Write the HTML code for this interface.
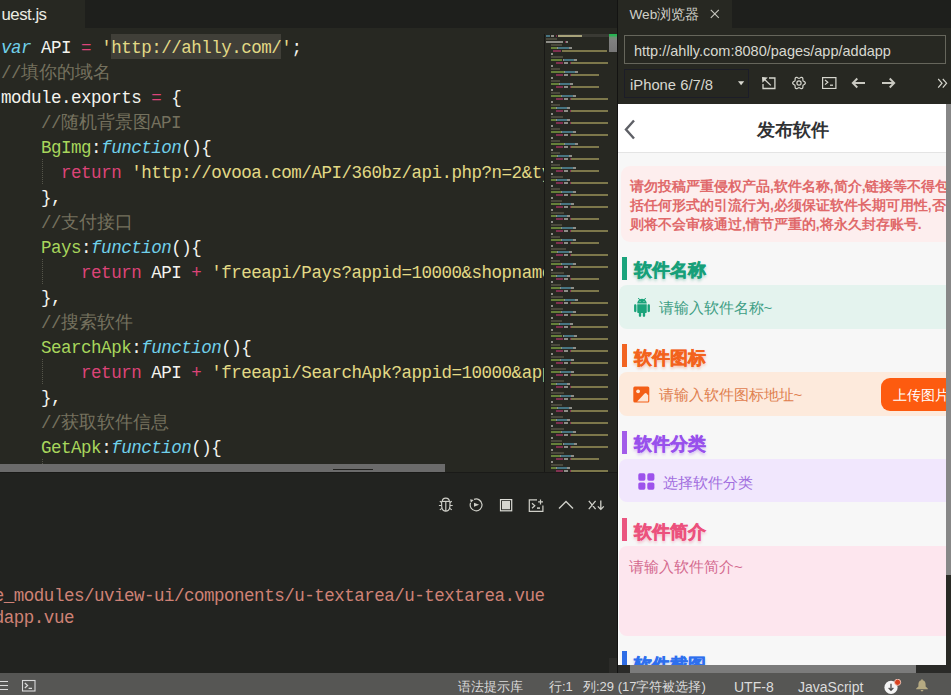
<!DOCTYPE html>
<html><head><meta charset="utf-8">
<style>
*{margin:0;padding:0;box-sizing:border-box}
html,body{width:951px;height:695px;overflow:hidden;background:#1e1f1c;font-family:"Liberation Sans",sans-serif}
.abs{position:absolute}
#tabbar{left:0;top:0;width:618px;height:28px;background:#1e1f1c}
#tab1{left:0;top:0;width:85px;height:28px;background:#272822;color:#ecece4;font-size:16.8px;line-height:30px;padding-left:1.5px;letter-spacing:-0.5px}
#editor{left:0;top:28px;width:617px;height:444px;background:#272822;overflow:hidden}
#code{left:0;top:-28px;width:545px;height:464px;overflow:hidden}
.ln{position:absolute;left:1px;margin-top:1.5px;height:25px;line-height:25px;white-space:pre;font-family:"Liberation Mono",monospace;font-size:17.5px;letter-spacing:-0.49px;color:#f8f8f2}
.cj{font-size:17.6px;letter-spacing:0}
.sel{background:#403f38;display:inline-block;height:25px;position:relative;top:-1.5px}.sel>span{position:relative;top:1.5px}
.guide{position:absolute;left:42px;width:1px;height:25px;border-left:1px dotted #55554a}
#mm{left:544px;top:-28px;width:73px;height:472px;border-left:1px solid transparent}#mmb{left:544px;top:34px;width:1px;height:438px;background:#181816}
#mm i{position:absolute;height:2px;display:block;margin-left:-1px;margin-top:1px}
#vthumb{left:609px;top:34px;width:8px;height:18px;background:linear-gradient(#25b550 0,#2bb055 1.5px,#6f8f74 3.5px,#808080 6px,#777 100%)}
#vgreen{left:609px;top:34px;width:8px;height:3px;background:#1db954}
#hthumb{left:0;top:464px;width:445px;height:8px;background:#6b6b6b}
#panel{left:0;top:472px;width:617px;height:201px;background:#222320}
.out{position:absolute;white-space:pre;font-family:"Liberation Mono",monospace;font-size:17.5px;letter-spacing:-0.49px;color:#cf8276}
#status{left:0;top:673px;width:951px;height:22px;background:#565654;color:#dcdcdc;font-size:13px}
#status span{position:absolute;top:2.5px;line-height:22px;white-space:pre}
/* right */
#rtabbar{left:618px;top:0;width:333px;height:28px;background:#1e1f1c}
#rtab{left:618px;top:0;width:114px;height:28px;background:#272822;color:#d0d0c8;font-size:14px;line-height:28px}
#rtool{left:618px;top:28px;width:333px;height:76px;background:#272822}
#url{left:624px;top:35px;width:322px;height:29px;border:1px solid #66665c;color:#d8d8d0;font-size:14.5px;line-height:31px;padding-left:9px;white-space:nowrap;overflow:hidden}
#dev{left:624px;top:69px;width:125px;height:29px;border:1px solid #1c1d28;background:#262721;color:#d8d8d0;font-size:14.8px;line-height:31px;padding-left:5px}
#web{left:618px;top:104px;width:328px;height:561px;background:#f7f7f7;overflow:hidden}
#vscroll{left:946px;top:104px;width:5px;height:471px;background:#878787}#vtrack{left:946px;top:575px;width:5px;height:90px;background:#292924}
#hscroll{left:618px;top:665px;width:333px;height:8px;background:#2a2a28}
#hscroll2{left:630px;top:665px;width:286px;height:8px;background:#7b7b7b}
.w{position:absolute}
.hdr{left:0;top:0;width:327px;height:49px;background:#fff;border-bottom:1px solid #e4e4e4}
.title{position:absolute;left:0;width:327px;top:2px;text-align:center;line-height:49px;font-size:18px;font-weight:bold;color:#303133}
.notice{left:3px;top:62px;width:330px;height:76px;background:#fdeeee;border-radius:9px}
.ntext{position:absolute;left:9px;top:11px;width:330px;font-size:13.8px;line-height:19px;font-weight:bold;color:#e0696a;white-space:pre}
.bar{position:absolute;left:4px;width:4.5px;height:22.5px}
.sec{position:absolute;left:15.5px;font-size:18.4px;font-weight:bold;-webkit-text-stroke:0.4px currentColor;line-height:24px;white-space:pre}
.box{position:absolute;left:1px;width:335px;border-radius:8px}
.ph{position:absolute;font-size:14px;line-height:20px;white-space:pre}
</style></head><body>
<div id="tabbar" class="abs"></div>
<div id="tab1" class="abs">uest.js</div>
<div id="editor" class="abs">
  <div id="code" class="abs">
  <div class="guide" style="top:159px"></div><div class="guide" style="top:259px"></div><div class="guide" style="top:359px"></div><div class="guide" style="top:459px"></div>
  <div class="ln" style="top:34px"><span style="color:#70d0ea;font-style:italic">var</span><span style="color:#f4f4ee;"> API </span><span style="color:#dc4478;">=</span> <span style="color:#e2d985;">'</span><span class="sel"><span style="color:#e2d985;">http://ahlly.com/</span></span><span style="color:#e2d985;">'</span><span style="color:#f4f4ee;">;</span></div>
<div class="ln" style="top:59px"><span style="color:#75715e;">//</span><span class="cj" style="color:#75715e">填你的域名</span></div>
<div class="ln" style="top:84px"><span style="color:#f4f4ee;">module.exports </span><span style="color:#dc4478;">=</span><span style="color:#f4f4ee;"> {</span></div>
<div class="ln" style="top:109px">    <span style="color:#75715e;">//</span><span class="cj" style="color:#75715e">随机背景图</span><span style="color:#75715e;">API</span></div>
<div class="ln" style="top:134px">    <span style="color:#a8d65c;">BgImg</span><span style="color:#f4f4ee;">:</span><span style="color:#70d0ea;font-style:italic">function</span><span style="color:#f4f4ee;">(){</span></div>
<div class="ln" style="top:159px">      <span style="color:#dc4478;">return</span> <span style="color:#e2d985;">'http://ovooa.com/API/360bz/api.php?n=2&amp;type=json'</span></div>
<div class="ln" style="top:184px">    <span style="color:#f4f4ee;">},</span></div>
<div class="ln" style="top:209px">    <span style="color:#75715e;">//</span><span class="cj" style="color:#75715e">支付接口</span></div>
<div class="ln" style="top:234px">    <span style="color:#a8d65c;">Pays</span><span style="color:#f4f4ee;">:</span><span style="color:#70d0ea;font-style:italic">function</span><span style="color:#f4f4ee;">(){</span></div>
<div class="ln" style="top:259px">        <span style="color:#dc4478;">return</span><span style="color:#f4f4ee;"> API </span><span style="color:#dc4478;">+</span> <span style="color:#e2d985;">'freeapi/Pays?appid=10000&amp;shopname=abc'</span></div>
<div class="ln" style="top:284px">    <span style="color:#f4f4ee;">},</span></div>
<div class="ln" style="top:309px">    <span style="color:#75715e;">//</span><span class="cj" style="color:#75715e">搜索软件</span></div>
<div class="ln" style="top:334px">    <span style="color:#a8d65c;">SearchApk</span><span style="color:#f4f4ee;">:</span><span style="color:#70d0ea;font-style:italic">function</span><span style="color:#f4f4ee;">(){</span></div>
<div class="ln" style="top:359px">        <span style="color:#dc4478;">return</span><span style="color:#f4f4ee;"> API </span><span style="color:#dc4478;">+</span> <span style="color:#e2d985;">'freeapi/SearchApk?appid=10000&amp;appname'</span></div>
<div class="ln" style="top:384px">    <span style="color:#f4f4ee;">},</span></div>
<div class="ln" style="top:409px">    <span style="color:#75715e;">//</span><span class="cj" style="color:#75715e">获取软件信息</span></div>
<div class="ln" style="top:434px">    <span style="color:#a8d65c;">GetApk</span><span style="color:#f4f4ee;">:</span><span style="color:#70d0ea;font-style:italic">function</span><span style="color:#f4f4ee;">(){</span></div>
<div class="ln" style="top:459px">        <span style="color:#dc4478;">return</span><span style="color:#f4f4ee;"> API </span><span style="color:#dc4478;">+</span> <span style="color:#e2d985;">'freeapi/GetApk?appid=10000'</span></div>

  </div>
  <div id="mm" class="abs"><i style="left:14px;top:33px;width:51px;height:3px;background:#3a3a34"></i><i style="left:1.8px;top:34px;width:4.3px;background:#477481"></i><i style="left:6.8px;top:34px;width:3.2px;background:#8e8e88"></i><i style="left:12.3px;top:34px;width:1.0px;background:#803150"></i><i style="left:14.0px;top:34px;width:23.7px;background:#a8a37a"></i><i style="left:1.8px;top:37px;width:11.0px;background:#4a493c"></i><i style="left:1.8px;top:40px;width:17.0px;background:#8e8e88"></i><i style="left:20.5px;top:40px;width:1.0px;background:#803150"></i><i style="left:22.3px;top:40px;width:2.0px;background:#8e8e88"></i><i style="left:6.8px;top:43px;width:11.0px;background:#4a493c"></i><i style="left:6.8px;top:46px;width:6.5px;background:#65803a"></i><i style="left:13.3px;top:46px;width:1.0px;background:#8e8e88"></i><i style="left:14.3px;top:46px;width:10.4px;background:#477481"></i><i style="left:24.7px;top:46px;width:3.0px;background:#8e8e88"></i><i style="left:9.0px;top:49px;width:7.5px;background:#803150"></i><i style="left:17.9px;top:49px;width:45.0px;background:#7d784b"></i><i style="left:6.8px;top:52px;width:2.0px;background:#8e8e88"></i><i style="left:6.8px;top:55px;width:12.0px;background:#4a493c"></i><i style="left:6.8px;top:58px;width:11.7px;background:#65803a"></i><i style="left:18.5px;top:58px;width:1.0px;background:#8e8e88"></i><i style="left:19.5px;top:58px;width:10.4px;background:#477481"></i><i style="left:29.9px;top:58px;width:3.0px;background:#8e8e88"></i><i style="left:11.8px;top:61px;width:7.2px;background:#803150"></i><i style="left:19.7px;top:61px;width:4.3px;background:#8e8e88"></i><i style="left:25.5px;top:61px;width:1.0px;background:#803150"></i><i style="left:27.0px;top:61px;width:36.5px;background:#7d784b"></i><i style="left:6.8px;top:64px;width:2.0px;background:#8e8e88"></i><i style="left:6.8px;top:67px;width:9.0px;background:#4a493c"></i><i style="left:6.8px;top:70px;width:13.0px;background:#65803a"></i><i style="left:19.8px;top:70px;width:1.0px;background:#8e8e88"></i><i style="left:20.8px;top:70px;width:10.4px;background:#477481"></i><i style="left:31.2px;top:70px;width:3.0px;background:#8e8e88"></i><i style="left:11.8px;top:73px;width:7.2px;background:#803150"></i><i style="left:19.7px;top:73px;width:4.3px;background:#8e8e88"></i><i style="left:25.5px;top:73px;width:1.0px;background:#803150"></i><i style="left:27.0px;top:73px;width:28.0px;background:#7d784b"></i><i style="left:6.8px;top:76px;width:2.0px;background:#8e8e88"></i><i style="left:6.8px;top:79px;width:9.0px;background:#4a493c"></i><i style="left:6.8px;top:82px;width:7.8px;background:#65803a"></i><i style="left:14.6px;top:82px;width:1.0px;background:#8e8e88"></i><i style="left:15.6px;top:82px;width:10.4px;background:#477481"></i><i style="left:26.0px;top:82px;width:3.0px;background:#8e8e88"></i><i style="left:11.8px;top:85px;width:7.2px;background:#803150"></i><i style="left:19.7px;top:85px;width:4.3px;background:#8e8e88"></i><i style="left:25.5px;top:85px;width:1.0px;background:#803150"></i><i style="left:27.0px;top:85px;width:28.0px;background:#7d784b"></i><i style="left:6.8px;top:88px;width:2.0px;background:#8e8e88"></i><i style="left:6.8px;top:91px;width:9.0px;background:#4a493c"></i><i style="left:6.8px;top:94px;width:10.4px;background:#65803a"></i><i style="left:17.2px;top:94px;width:1.0px;background:#8e8e88"></i><i style="left:18.2px;top:94px;width:10.4px;background:#477481"></i><i style="left:28.6px;top:94px;width:3.0px;background:#8e8e88"></i><i style="left:11.8px;top:97px;width:7.2px;background:#803150"></i><i style="left:19.7px;top:97px;width:4.3px;background:#8e8e88"></i><i style="left:25.5px;top:97px;width:1.0px;background:#803150"></i><i style="left:27.0px;top:97px;width:36.5px;background:#7d784b"></i><i style="left:6.8px;top:100px;width:2.0px;background:#8e8e88"></i><i style="left:6.8px;top:103px;width:9.0px;background:#4a493c"></i><i style="left:6.8px;top:106px;width:5.2px;background:#65803a"></i><i style="left:12.0px;top:106px;width:1.0px;background:#8e8e88"></i><i style="left:13.0px;top:106px;width:10.4px;background:#477481"></i><i style="left:23.4px;top:106px;width:3.0px;background:#8e8e88"></i><i style="left:11.8px;top:109px;width:7.2px;background:#803150"></i><i style="left:19.7px;top:109px;width:4.3px;background:#8e8e88"></i><i style="left:25.5px;top:109px;width:1.0px;background:#803150"></i><i style="left:27.0px;top:109px;width:36.5px;background:#7d784b"></i><i style="left:6.8px;top:112px;width:2.0px;background:#8e8e88"></i><i style="left:6.8px;top:115px;width:12.0px;background:#4a493c"></i><i style="left:6.8px;top:118px;width:5.2px;background:#65803a"></i><i style="left:12.0px;top:118px;width:1.0px;background:#8e8e88"></i><i style="left:13.0px;top:118px;width:10.4px;background:#477481"></i><i style="left:23.4px;top:118px;width:3.0px;background:#8e8e88"></i><i style="left:11.8px;top:121px;width:7.2px;background:#803150"></i><i style="left:19.7px;top:121px;width:4.3px;background:#8e8e88"></i><i style="left:25.5px;top:121px;width:1.0px;background:#803150"></i><i style="left:27.0px;top:121px;width:36.5px;background:#7d784b"></i><i style="left:6.8px;top:124px;width:2.0px;background:#8e8e88"></i><i style="left:6.8px;top:127px;width:9.0px;background:#4a493c"></i><i style="left:6.8px;top:130px;width:10.4px;background:#65803a"></i><i style="left:17.2px;top:130px;width:1.0px;background:#8e8e88"></i><i style="left:18.2px;top:130px;width:10.4px;background:#477481"></i><i style="left:28.6px;top:130px;width:3.0px;background:#8e8e88"></i><i style="left:11.8px;top:133px;width:7.2px;background:#803150"></i><i style="left:19.7px;top:133px;width:4.3px;background:#8e8e88"></i><i style="left:25.5px;top:133px;width:1.0px;background:#803150"></i><i style="left:27.0px;top:133px;width:36.5px;background:#7d784b"></i><i style="left:6.8px;top:136px;width:2.0px;background:#8e8e88"></i><i style="left:6.8px;top:139px;width:9.0px;background:#4a493c"></i><i style="left:6.8px;top:142px;width:13.0px;background:#65803a"></i><i style="left:19.8px;top:142px;width:1.0px;background:#8e8e88"></i><i style="left:20.8px;top:142px;width:10.4px;background:#477481"></i><i style="left:31.2px;top:142px;width:3.0px;background:#8e8e88"></i><i style="left:11.8px;top:145px;width:7.2px;background:#803150"></i><i style="left:19.7px;top:145px;width:4.3px;background:#8e8e88"></i><i style="left:25.5px;top:145px;width:1.0px;background:#803150"></i><i style="left:27.0px;top:145px;width:28.0px;background:#7d784b"></i><i style="left:6.8px;top:148px;width:2.0px;background:#8e8e88"></i><i style="left:6.8px;top:151px;width:9.0px;background:#4a493c"></i><i style="left:6.8px;top:154px;width:6.5px;background:#65803a"></i><i style="left:13.3px;top:154px;width:1.0px;background:#8e8e88"></i><i style="left:14.3px;top:154px;width:10.4px;background:#477481"></i><i style="left:24.7px;top:154px;width:3.0px;background:#8e8e88"></i><i style="left:11.8px;top:157px;width:7.2px;background:#803150"></i><i style="left:19.7px;top:157px;width:4.3px;background:#8e8e88"></i><i style="left:25.5px;top:157px;width:1.0px;background:#803150"></i><i style="left:27.0px;top:157px;width:28.0px;background:#7d784b"></i><i style="left:6.8px;top:160px;width:2.0px;background:#8e8e88"></i><i style="left:6.8px;top:163px;width:9.0px;background:#4a493c"></i><i style="left:6.8px;top:166px;width:10.4px;background:#65803a"></i><i style="left:17.2px;top:166px;width:1.0px;background:#8e8e88"></i><i style="left:18.2px;top:166px;width:10.4px;background:#477481"></i><i style="left:28.6px;top:166px;width:3.0px;background:#8e8e88"></i><i style="left:11.8px;top:169px;width:7.2px;background:#803150"></i><i style="left:19.7px;top:169px;width:4.3px;background:#8e8e88"></i><i style="left:25.5px;top:169px;width:1.0px;background:#803150"></i><i style="left:27.0px;top:169px;width:28.0px;background:#7d784b"></i><i style="left:6.8px;top:172px;width:2.0px;background:#8e8e88"></i><i style="left:6.8px;top:175px;width:12.0px;background:#4a493c"></i><i style="left:6.8px;top:178px;width:5.2px;background:#65803a"></i><i style="left:12.0px;top:178px;width:1.0px;background:#8e8e88"></i><i style="left:13.0px;top:178px;width:10.4px;background:#477481"></i><i style="left:23.4px;top:178px;width:3.0px;background:#8e8e88"></i><i style="left:11.8px;top:181px;width:7.2px;background:#803150"></i><i style="left:19.7px;top:181px;width:4.3px;background:#8e8e88"></i><i style="left:25.5px;top:181px;width:1.0px;background:#803150"></i><i style="left:27.0px;top:181px;width:36.5px;background:#7d784b"></i><i style="left:6.8px;top:184px;width:2.0px;background:#8e8e88"></i><i style="left:6.8px;top:187px;width:9.0px;background:#4a493c"></i><i style="left:6.8px;top:190px;width:10.4px;background:#65803a"></i><i style="left:17.2px;top:190px;width:1.0px;background:#8e8e88"></i><i style="left:18.2px;top:190px;width:10.4px;background:#477481"></i><i style="left:28.6px;top:190px;width:3.0px;background:#8e8e88"></i><i style="left:11.8px;top:193px;width:7.2px;background:#803150"></i><i style="left:19.7px;top:193px;width:4.3px;background:#8e8e88"></i><i style="left:25.5px;top:193px;width:1.0px;background:#803150"></i><i style="left:27.0px;top:193px;width:36.5px;background:#7d784b"></i><i style="left:6.8px;top:196px;width:2.0px;background:#8e8e88"></i><i style="left:6.8px;top:199px;width:11.0px;background:#4a493c"></i><i style="left:6.8px;top:202px;width:9.1px;background:#65803a"></i><i style="left:15.9px;top:202px;width:1.0px;background:#8e8e88"></i><i style="left:16.9px;top:202px;width:10.4px;background:#477481"></i><i style="left:27.3px;top:202px;width:3.0px;background:#8e8e88"></i><i style="left:11.8px;top:205px;width:7.2px;background:#803150"></i><i style="left:19.7px;top:205px;width:4.3px;background:#8e8e88"></i><i style="left:25.5px;top:205px;width:1.0px;background:#803150"></i><i style="left:27.0px;top:205px;width:36.5px;background:#7d784b"></i><i style="left:6.8px;top:208px;width:2.0px;background:#8e8e88"></i><i style="left:6.8px;top:211px;width:13.0px;background:#4a493c"></i><i style="left:6.8px;top:214px;width:5.2px;background:#65803a"></i><i style="left:12.0px;top:214px;width:1.0px;background:#8e8e88"></i><i style="left:13.0px;top:214px;width:10.4px;background:#477481"></i><i style="left:23.4px;top:214px;width:3.0px;background:#8e8e88"></i><i style="left:11.8px;top:217px;width:7.2px;background:#803150"></i><i style="left:19.7px;top:217px;width:4.3px;background:#8e8e88"></i><i style="left:25.5px;top:217px;width:1.0px;background:#803150"></i><i style="left:27.0px;top:217px;width:28.0px;background:#7d784b"></i><i style="left:6.8px;top:220px;width:2.0px;background:#8e8e88"></i><i style="left:6.8px;top:223px;width:11.0px;background:#4a493c"></i><i style="left:6.8px;top:226px;width:10.4px;background:#65803a"></i><i style="left:17.2px;top:226px;width:1.0px;background:#8e8e88"></i><i style="left:18.2px;top:226px;width:10.4px;background:#477481"></i><i style="left:28.6px;top:226px;width:3.0px;background:#8e8e88"></i><i style="left:11.8px;top:229px;width:7.2px;background:#803150"></i><i style="left:19.7px;top:229px;width:4.3px;background:#8e8e88"></i><i style="left:25.5px;top:229px;width:1.0px;background:#803150"></i><i style="left:27.0px;top:229px;width:36.5px;background:#7d784b"></i><i style="left:6.8px;top:232px;width:2.0px;background:#8e8e88"></i><i style="left:6.8px;top:235px;width:9.0px;background:#4a493c"></i><i style="left:6.8px;top:238px;width:10.4px;background:#65803a"></i><i style="left:17.2px;top:238px;width:1.0px;background:#8e8e88"></i><i style="left:18.2px;top:238px;width:10.4px;background:#477481"></i><i style="left:28.6px;top:238px;width:3.0px;background:#8e8e88"></i><i style="left:11.8px;top:241px;width:7.2px;background:#803150"></i><i style="left:19.7px;top:241px;width:4.3px;background:#8e8e88"></i><i style="left:25.5px;top:241px;width:1.0px;background:#803150"></i><i style="left:27.0px;top:241px;width:28.0px;background:#7d784b"></i><i style="left:6.8px;top:244px;width:2.0px;background:#8e8e88"></i><i style="left:6.8px;top:247px;width:15.0px;background:#4a493c"></i><i style="left:6.8px;top:250px;width:6.5px;background:#65803a"></i><i style="left:13.3px;top:250px;width:1.0px;background:#8e8e88"></i><i style="left:14.3px;top:250px;width:10.4px;background:#477481"></i><i style="left:24.7px;top:250px;width:3.0px;background:#8e8e88"></i><i style="left:11.8px;top:253px;width:7.2px;background:#803150"></i><i style="left:19.7px;top:253px;width:4.3px;background:#8e8e88"></i><i style="left:25.5px;top:253px;width:1.0px;background:#803150"></i><i style="left:27.0px;top:253px;width:36.5px;background:#7d784b"></i><i style="left:6.8px;top:256px;width:2.0px;background:#8e8e88"></i><i style="left:6.8px;top:259px;width:9.0px;background:#4a493c"></i><i style="left:6.8px;top:262px;width:10.4px;background:#65803a"></i><i style="left:17.2px;top:262px;width:1.0px;background:#8e8e88"></i><i style="left:18.2px;top:262px;width:10.4px;background:#477481"></i><i style="left:28.6px;top:262px;width:3.0px;background:#8e8e88"></i><i style="left:11.8px;top:265px;width:7.2px;background:#803150"></i><i style="left:19.7px;top:265px;width:4.3px;background:#8e8e88"></i><i style="left:25.5px;top:265px;width:1.0px;background:#803150"></i><i style="left:27.0px;top:265px;width:36.5px;background:#7d784b"></i><i style="left:6.8px;top:268px;width:2.0px;background:#8e8e88"></i><i style="left:6.8px;top:271px;width:13.0px;background:#4a493c"></i><i style="left:6.8px;top:274px;width:5.2px;background:#65803a"></i><i style="left:12.0px;top:274px;width:1.0px;background:#8e8e88"></i><i style="left:13.0px;top:274px;width:10.4px;background:#477481"></i><i style="left:23.4px;top:274px;width:3.0px;background:#8e8e88"></i><i style="left:11.8px;top:277px;width:7.2px;background:#803150"></i><i style="left:19.7px;top:277px;width:4.3px;background:#8e8e88"></i><i style="left:25.5px;top:277px;width:1.0px;background:#803150"></i><i style="left:27.0px;top:277px;width:28.0px;background:#7d784b"></i><i style="left:6.8px;top:280px;width:2.0px;background:#8e8e88"></i><i style="left:6.8px;top:283px;width:10.0px;background:#4a493c"></i><i style="left:6.8px;top:286px;width:9.1px;background:#65803a"></i><i style="left:15.9px;top:286px;width:1.0px;background:#8e8e88"></i><i style="left:16.9px;top:286px;width:10.4px;background:#477481"></i><i style="left:27.3px;top:286px;width:3.0px;background:#8e8e88"></i><i style="left:11.8px;top:289px;width:7.2px;background:#803150"></i><i style="left:19.7px;top:289px;width:4.3px;background:#8e8e88"></i><i style="left:25.5px;top:289px;width:1.0px;background:#803150"></i><i style="left:27.0px;top:289px;width:28.0px;background:#7d784b"></i><i style="left:6.8px;top:292px;width:2.0px;background:#8e8e88"></i><i style="left:6.8px;top:295px;width:12.0px;background:#4a493c"></i><i style="left:6.8px;top:298px;width:13.0px;background:#65803a"></i><i style="left:19.8px;top:298px;width:1.0px;background:#8e8e88"></i><i style="left:20.8px;top:298px;width:10.4px;background:#477481"></i><i style="left:31.2px;top:298px;width:3.0px;background:#8e8e88"></i><i style="left:11.8px;top:301px;width:7.2px;background:#803150"></i><i style="left:19.7px;top:301px;width:4.3px;background:#8e8e88"></i><i style="left:25.5px;top:301px;width:1.0px;background:#803150"></i><i style="left:27.0px;top:301px;width:36.5px;background:#7d784b"></i><i style="left:6.8px;top:304px;width:2.0px;background:#8e8e88"></i><i style="left:6.8px;top:307px;width:12.0px;background:#4a493c"></i><i style="left:6.8px;top:310px;width:10.4px;background:#65803a"></i><i style="left:17.2px;top:310px;width:1.0px;background:#8e8e88"></i><i style="left:18.2px;top:310px;width:10.4px;background:#477481"></i><i style="left:28.6px;top:310px;width:3.0px;background:#8e8e88"></i><i style="left:11.8px;top:313px;width:7.2px;background:#803150"></i><i style="left:19.7px;top:313px;width:4.3px;background:#8e8e88"></i><i style="left:25.5px;top:313px;width:1.0px;background:#803150"></i><i style="left:27.0px;top:313px;width:36.5px;background:#7d784b"></i><i style="left:6.8px;top:316px;width:2.0px;background:#8e8e88"></i><i style="left:6.8px;top:319px;width:11.0px;background:#4a493c"></i><i style="left:6.8px;top:322px;width:7.8px;background:#65803a"></i><i style="left:14.6px;top:322px;width:1.0px;background:#8e8e88"></i><i style="left:15.6px;top:322px;width:10.4px;background:#477481"></i><i style="left:26.0px;top:322px;width:3.0px;background:#8e8e88"></i><i style="left:11.8px;top:325px;width:7.2px;background:#803150"></i><i style="left:19.7px;top:325px;width:4.3px;background:#8e8e88"></i><i style="left:25.5px;top:325px;width:1.0px;background:#803150"></i><i style="left:27.0px;top:325px;width:36.5px;background:#7d784b"></i><i style="left:6.8px;top:328px;width:2.0px;background:#8e8e88"></i><i style="left:6.8px;top:331px;width:10.0px;background:#4a493c"></i><i style="left:6.8px;top:334px;width:11.7px;background:#65803a"></i><i style="left:18.5px;top:334px;width:1.0px;background:#8e8e88"></i><i style="left:19.5px;top:334px;width:10.4px;background:#477481"></i><i style="left:29.9px;top:334px;width:3.0px;background:#8e8e88"></i><i style="left:11.8px;top:337px;width:7.2px;background:#803150"></i><i style="left:19.7px;top:337px;width:4.3px;background:#8e8e88"></i><i style="left:25.5px;top:337px;width:1.0px;background:#803150"></i><i style="left:27.0px;top:337px;width:36.5px;background:#7d784b"></i><i style="left:6.8px;top:340px;width:2.0px;background:#8e8e88"></i><i style="left:6.8px;top:343px;width:9.0px;background:#4a493c"></i><i style="left:6.8px;top:346px;width:10.4px;background:#65803a"></i><i style="left:17.2px;top:346px;width:1.0px;background:#8e8e88"></i><i style="left:18.2px;top:346px;width:10.4px;background:#477481"></i><i style="left:28.6px;top:346px;width:3.0px;background:#8e8e88"></i><i style="left:11.8px;top:349px;width:7.2px;background:#803150"></i><i style="left:19.7px;top:349px;width:4.3px;background:#8e8e88"></i><i style="left:25.5px;top:349px;width:1.0px;background:#803150"></i><i style="left:27.0px;top:349px;width:36.5px;background:#7d784b"></i><i style="left:6.8px;top:352px;width:2.0px;background:#8e8e88"></i><i style="left:6.8px;top:355px;width:13.0px;background:#4a493c"></i><i style="left:6.8px;top:358px;width:9.1px;background:#65803a"></i><i style="left:15.9px;top:358px;width:1.0px;background:#8e8e88"></i><i style="left:16.9px;top:358px;width:10.4px;background:#477481"></i><i style="left:27.3px;top:358px;width:3.0px;background:#8e8e88"></i><i style="left:11.8px;top:361px;width:7.2px;background:#803150"></i><i style="left:19.7px;top:361px;width:4.3px;background:#8e8e88"></i><i style="left:25.5px;top:361px;width:1.0px;background:#803150"></i><i style="left:27.0px;top:361px;width:36.5px;background:#7d784b"></i><i style="left:6.8px;top:364px;width:2.0px;background:#8e8e88"></i><i style="left:6.8px;top:367px;width:15.0px;background:#4a493c"></i><i style="left:6.8px;top:370px;width:9.1px;background:#65803a"></i><i style="left:15.9px;top:370px;width:1.0px;background:#8e8e88"></i><i style="left:16.9px;top:370px;width:10.4px;background:#477481"></i><i style="left:27.3px;top:370px;width:3.0px;background:#8e8e88"></i><i style="left:11.8px;top:373px;width:7.2px;background:#803150"></i><i style="left:19.7px;top:373px;width:4.3px;background:#8e8e88"></i><i style="left:25.5px;top:373px;width:1.0px;background:#803150"></i><i style="left:27.0px;top:373px;width:36.5px;background:#7d784b"></i><i style="left:6.8px;top:376px;width:2.0px;background:#8e8e88"></i><i style="left:6.8px;top:379px;width:13.0px;background:#4a493c"></i><i style="left:6.8px;top:382px;width:5.2px;background:#65803a"></i><i style="left:12.0px;top:382px;width:1.0px;background:#8e8e88"></i><i style="left:13.0px;top:382px;width:10.4px;background:#477481"></i><i style="left:23.4px;top:382px;width:3.0px;background:#8e8e88"></i><i style="left:11.8px;top:385px;width:7.2px;background:#803150"></i><i style="left:19.7px;top:385px;width:4.3px;background:#8e8e88"></i><i style="left:25.5px;top:385px;width:1.0px;background:#803150"></i><i style="left:27.0px;top:385px;width:36.5px;background:#7d784b"></i><i style="left:6.8px;top:388px;width:2.0px;background:#8e8e88"></i><i style="left:6.8px;top:391px;width:13.0px;background:#4a493c"></i><i style="left:6.8px;top:394px;width:9.1px;background:#65803a"></i><i style="left:15.9px;top:394px;width:1.0px;background:#8e8e88"></i><i style="left:16.9px;top:394px;width:10.4px;background:#477481"></i><i style="left:27.3px;top:394px;width:3.0px;background:#8e8e88"></i><i style="left:11.8px;top:397px;width:7.2px;background:#803150"></i><i style="left:19.7px;top:397px;width:4.3px;background:#8e8e88"></i><i style="left:25.5px;top:397px;width:1.0px;background:#803150"></i><i style="left:27.0px;top:397px;width:36.5px;background:#7d784b"></i><i style="left:6.8px;top:400px;width:2.0px;background:#8e8e88"></i><i style="left:6.8px;top:403px;width:11.0px;background:#4a493c"></i><i style="left:6.8px;top:406px;width:6.5px;background:#65803a"></i><i style="left:13.3px;top:406px;width:1.0px;background:#8e8e88"></i><i style="left:14.3px;top:406px;width:10.4px;background:#477481"></i><i style="left:24.7px;top:406px;width:3.0px;background:#8e8e88"></i><i style="left:11.8px;top:409px;width:7.2px;background:#803150"></i><i style="left:19.7px;top:409px;width:4.3px;background:#8e8e88"></i><i style="left:25.5px;top:409px;width:1.0px;background:#803150"></i><i style="left:27.0px;top:409px;width:36.5px;background:#7d784b"></i><i style="left:6.8px;top:412px;width:2.0px;background:#8e8e88"></i><i style="left:6.8px;top:415px;width:12.0px;background:#4a493c"></i><i style="left:6.8px;top:418px;width:5.2px;background:#65803a"></i><i style="left:12.0px;top:418px;width:1.0px;background:#8e8e88"></i><i style="left:13.0px;top:418px;width:10.4px;background:#477481"></i><i style="left:23.4px;top:418px;width:3.0px;background:#8e8e88"></i><i style="left:11.8px;top:421px;width:7.2px;background:#803150"></i><i style="left:19.7px;top:421px;width:4.3px;background:#8e8e88"></i><i style="left:25.5px;top:421px;width:1.0px;background:#803150"></i><i style="left:27.0px;top:421px;width:36.5px;background:#7d784b"></i><i style="left:6.8px;top:424px;width:2.0px;background:#8e8e88"></i><i style="left:6.8px;top:427px;width:13.0px;background:#4a493c"></i><i style="left:6.8px;top:430px;width:10.4px;background:#65803a"></i><i style="left:17.2px;top:430px;width:1.0px;background:#8e8e88"></i><i style="left:18.2px;top:430px;width:10.4px;background:#477481"></i><i style="left:28.6px;top:430px;width:3.0px;background:#8e8e88"></i><i style="left:11.8px;top:433px;width:7.2px;background:#803150"></i><i style="left:19.7px;top:433px;width:4.3px;background:#8e8e88"></i><i style="left:25.5px;top:433px;width:1.0px;background:#803150"></i><i style="left:27.0px;top:433px;width:36.5px;background:#7d784b"></i><i style="left:6.8px;top:436px;width:2.0px;background:#8e8e88"></i><i style="left:6.8px;top:439px;width:11.0px;background:#4a493c"></i><i style="left:6.8px;top:442px;width:11.7px;background:#65803a"></i><i style="left:18.5px;top:442px;width:1.0px;background:#8e8e88"></i><i style="left:19.5px;top:442px;width:10.4px;background:#477481"></i><i style="left:29.9px;top:442px;width:3.0px;background:#8e8e88"></i><i style="left:11.8px;top:445px;width:7.2px;background:#803150"></i><i style="left:19.7px;top:445px;width:4.3px;background:#8e8e88"></i><i style="left:25.5px;top:445px;width:1.0px;background:#803150"></i><i style="left:27.0px;top:445px;width:36.5px;background:#7d784b"></i><i style="left:6.8px;top:448px;width:2.0px;background:#8e8e88"></i><i style="left:6.8px;top:451px;width:13.0px;background:#4a493c"></i><i style="left:6.8px;top:454px;width:9.1px;background:#65803a"></i><i style="left:15.9px;top:454px;width:1.0px;background:#8e8e88"></i><i style="left:16.9px;top:454px;width:10.4px;background:#477481"></i><i style="left:27.3px;top:454px;width:3.0px;background:#8e8e88"></i><i style="left:11.8px;top:457px;width:7.2px;background:#803150"></i><i style="left:19.7px;top:457px;width:4.3px;background:#8e8e88"></i><i style="left:25.5px;top:457px;width:1.0px;background:#803150"></i><i style="left:27.0px;top:457px;width:28.0px;background:#7d784b"></i><i style="left:6.8px;top:460px;width:2.0px;background:#8e8e88"></i><i style="left:6.8px;top:463px;width:12.0px;background:#4a493c"></i><i style="left:6.8px;top:466px;width:5.2px;background:#65803a"></i><i style="left:12.0px;top:466px;width:1.0px;background:#8e8e88"></i><i style="left:13.0px;top:466px;width:10.4px;background:#477481"></i><i style="left:23.4px;top:466px;width:3.0px;background:#8e8e88"></i><i style="left:11.8px;top:469px;width:7.2px;background:#803150"></i><i style="left:19.7px;top:469px;width:4.3px;background:#8e8e88"></i><i style="left:25.5px;top:469px;width:1.0px;background:#803150"></i><i style="left:27.0px;top:469px;width:36.5px;background:#7d784b"></i></div>
</div>
<div id="vthumb" class="abs"></div>
<div id="mmb" class="abs"></div>
<div id="hthumb" class="abs"></div>
<div class="abs" style="left:333px;top:468.5px;width:40px;height:1.3px;background:#222220"></div>
<div class="abs" style="left:334px;top:475px;width:39px;height:1px;background:#2b2c29"></div>
<div id="panel" class="abs">
  
<svg class="abs" style="left:438px;top:25px" width="16" height="16" viewBox="0 0 16 16" fill="none" stroke="#cfcfc8" stroke-width="1.15">
 <path d="M4.3 4.4C4.3 2.3 5.7 1.1 7.8 1.1C9.9 1.1 11.3 2.3 11.3 4.4"/><path d="M3.7 4.4H11.9"/>
 <path d="M3.7 4.4C3.6 6.5 3.6 7.5 3.7 9.5C3.9 12.3 5.6 14.1 7.8 14.1C10 14.1 11.7 12.3 11.9 9.5C12 7.5 12 6.5 11.9 4.4"/>
 <path d="M7.8 4.4V14M3.8 5.6L1.8 4.3M3.7 8.5H0.9M3.9 11.4L1.8 12.9M11.8 5.6L13.8 4.3M11.9 8.5H14.7M11.7 11.4L13.8 12.9"/>
</svg>
<svg class="abs" style="left:469px;top:26px" width="15" height="15" viewBox="0 0 15 15" fill="none" stroke="#cfcfc8" stroke-width="1.2">
 <path d="M5.08 1.36A5.9 5.9 0 1 1 1.56 4.88"/><path d="M1.2 1.3L4.6 1.9L1.8 4.7Z" fill="#cfcfc8" stroke="none"/><path d="M5 4.7V8.8L10.1 6.7Z" fill="#cfcfc8" stroke="none"/>
</svg>
<svg class="abs" style="left:499px;top:26px" width="14" height="14" viewBox="0 0 14 14"><rect x="1.5" y="1.6" width="11.2" height="11.2" fill="none" stroke="#dcdcd6" stroke-width="1.2"/><rect x="3" y="3" width="8" height="8.3" fill="#d6d6d0"/></svg>
<svg class="abs" style="left:528px;top:26px" width="16" height="15" viewBox="0 0 16 15" fill="none" stroke="#cfcfc8" stroke-width="1.2">
 <path d="M9 1.9H1.3V13.4H14.9V7.4"/><path d="M4 5.3L6.8 7.8L4 10.3"/><path d="M9 10.1H12" stroke-width="1.5"/><path d="M12.5 1.5V6.4M10.1 3.9H15"/>
</svg>
<svg class="abs" style="left:558px;top:28px" width="16" height="10" viewBox="0 0 16 10" fill="none" stroke="#cfcfc8" stroke-width="1.4"><path d="M1 8.5L8 1.5L15 8.5"/></svg>
<svg class="abs" style="left:588px;top:28px" width="17" height="11" viewBox="0 0 17 11" fill="none" stroke="#cfcfc8" stroke-width="1.3"><path d="M0.8 0.8L7.6 9.2M7.6 0.8L0.8 9.2M12.8 0.6V9.4M9.8 6.4L12.8 9.4L15.8 6.4"/></svg>

  <div class="out" style="left:-6.2px;top:112.5px;line-height:22px">e_modules/uview-ui/components/u-textarea/u-textarea.vue</div>
  <div class="out" style="left:-6.2px;top:135px;line-height:22px">dapp.vue</div>
</div>
<div class="abs" style="left:609px;top:658px;width:8px;height:15px;background:#2b2b28"></div>
<div class="abs" style="left:617px;top:0;width:1px;height:673px;background:#131312"></div>
<div class="abs" style="left:0;top:472px;width:617px;height:1px;background:#1a1a18"></div>
<div id="status" class="abs">
  
<svg class="abs" style="left:0;top:0" width="40" height="22" fill="none" stroke="#dadada" stroke-width="1.1"><path d="M0 8.5H8M0 12.5H8M0 16.5H8"/><rect x="22.5" y="7.5" width="12.5" height="10.5"/><path d="M24.8 10L27.6 12.5L24.8 15M28.6 15.3H32" stroke-width="1.2"/></svg>
<span style="left:458px">语法提示库</span>
<span style="left:549px">行:1</span>
<span style="left:583px">列:29 (17字符被选择)</span>
<span style="left:734px;font-size:14px">UTF-8</span>
<span style="left:798px;font-size:14px">JavaScript</span>
<svg class="abs" style="left:883px;top:6px" width="19" height="16" viewBox="0 0 19 16"><circle cx="8" cy="8.4" r="6.6" fill="#f4f4f4"/><path d="M8 4.8V11.3M5.6 8.9L8 11.3L10.4 8.9" stroke="#4a4a4a" stroke-width="1.3" fill="none"/><circle cx="14.6" cy="3.3" r="3.1" fill="#d9411f" stroke="#f2c9bd" stroke-width="0.9"/></svg>
<svg class="abs" style="left:915px;top:5px" width="14" height="15" viewBox="0 0 14 15"><path d="M7 1.2C7.6 1.2 7.8 1.8 7.8 2.3C9.8 2.8 10.6 4.5 10.6 6.5V8.6L12.8 10.5V11.2H1.2V10.5L3.4 8.6V6.5C3.4 4.5 4.2 2.8 6.2 2.3C6.2 1.8 6.4 1.2 7 1.2Z" fill="#b6aa82"/><path d="M5.6 12.1H8.4A1.4 1.4 0 0 1 5.6 12.1Z" fill="#b6aa82"/></svg>

</div>
<div id="rtabbar" class="abs"></div>
<div id="rtab" class="abs"><span style="position:absolute;left:11.5px;font-size:13.6px;top:0.5px">Web浏览器</span><svg style="position:absolute;left:92px;top:9px" width="10" height="10"><path d="M0.8 0.8L8.8 8.8M8.8 0.8L0.8 8.8" stroke="#c8c8c0" stroke-width="1.1"/></svg></div>
<div id="rtool" class="abs"></div>
<div id="url" class="abs">http://ahlly.com:8080/pages/app/addapp</div>
<div id="dev" class="abs">iPhone 6/7/8<svg style="position:absolute;left:113px;top:11px" width="7" height="5"><path d="M0 0.2H6.2L3.1 4.2Z" fill="#d8d8d0"/></svg></div>

<svg class="abs" style="left:761px;top:76px" width="16" height="14" viewBox="0 0 16 14" fill="none" stroke="#d6d6ce" stroke-width="1.3">
 <path d="M8 2H13.9V12.5H2V8"/><path d="M2 2L9.8 9.4"/><path d="M1 1L6.8 1.4L1.4 6.8Z" fill="#d6d6ce" stroke="none"/></svg>
<svg class="abs" style="left:791.5px;top:75.8px" width="14" height="14" viewBox="0 0 14 14" fill="none" stroke="#d6d6ce" stroke-width="1.2">
 <path d="M13.35 7.00 L13.21 7.54 L12.83 8.03 L12.31 8.42 L11.77 8.74 L11.32 9.01 L11.03 9.32 L10.90 9.73 L10.89 10.26 L10.89 10.89 L10.81 11.54 L10.58 12.11 L10.18 12.50 L9.64 12.65 L9.03 12.57 L8.42 12.31 L7.88 12.00 L7.42 11.75 L7.00 11.65 L6.58 11.75 L6.12 12.00 L5.58 12.31 L4.97 12.57 L4.36 12.65 L3.83 12.50 L3.42 12.11 L3.19 11.54 L3.11 10.89 L3.11 10.26 L3.10 9.73 L2.97 9.33 L2.68 9.01 L2.23 8.74 L1.69 8.42 L1.17 8.03 L0.79 7.54 L0.65 7.00 L0.79 6.46 L1.17 5.97 L1.69 5.58 L2.23 5.26 L2.68 4.99 L2.97 4.67 L3.10 4.27 L3.11 3.74 L3.11 3.11 L3.19 2.46 L3.42 1.89 L3.82 1.50 L4.36 1.35 L4.97 1.43 L5.58 1.69 L6.12 2.00 L6.58 2.25 L7.00 2.35 L7.42 2.25 L7.88 2.00 L8.42 1.69 L9.03 1.43 L9.64 1.35 L10.17 1.50 L10.58 1.89 L10.81 2.46 L10.89 3.11 L10.89 3.74 L10.90 4.27 L11.03 4.68 L11.32 4.99 L11.77 5.26 L12.31 5.58 L12.83 5.97 L13.21 6.46 L13.35 7.00Z"/><circle cx="7" cy="7" r="2.1"/></svg>
<svg class="abs" style="left:822px;top:77px" width="15" height="12" viewBox="0 0 15 12" fill="none" stroke="#d6d6ce" stroke-width="1.2">
 <rect x="0.6" y="0.6" width="13.3" height="10.9"/><path d="M3 3L5.8 5.3L3 7.6"/><path d="M8 8.2H11" stroke-width="1.3"/></svg>
<svg class="abs" style="left:851px;top:77px" width="16" height="12" viewBox="0 0 16 12" fill="none" stroke="#c9c9c1" stroke-width="1.9">
 <path d="M14 6H2.2M6.3 1.5L1.8 6L6.3 10.5"/></svg>
<svg class="abs" style="left:881px;top:77px" width="16" height="12" viewBox="0 0 16 12" fill="none" stroke="#c9c9c1" stroke-width="1.9">
 <path d="M1 6H12.8M8.7 1.5L13.2 6L8.7 10.5"/></svg>
<svg class="abs" style="left:937px;top:78px" width="12" height="11" viewBox="0 0 12 11" fill="none" stroke="#d6d6ce" stroke-width="1.2">
 <path d="M1.2 1L5 5.2L1.2 9.6M5.8 1L9.6 5.2L5.8 9.6"/></svg>

<div id="web" class="abs">
  
<div class="w" style="left:0;top:0;width:350px;height:561px;">
<div class="w hdr" style="width:350px"></div>
<svg class="w" style="left:5px;top:15px" width="14" height="21" viewBox="0 0 14 21"><path d="M11 1.5L3 10.5L11 19.5" stroke="#5e6066" stroke-width="2.4" fill="none"/></svg>
<div class="title" style="width:350px">发布软件</div>
<div class="w notice" style="width:343px"><div class="ntext">请勿投稿严重侵权产品,软件名称,简介,链接等不得包
括任何形式的引流行为,必须保证软件长期可用性,否
则将不会审核通过,情节严重的,将永久封存账号.</div></div>

<div class="bar" style="top:153px;background:#1ba37c"></div>
<div class="sec" style="top:154.3px;color:#16a079;text-shadow:0 1.5px 3px rgba(26,156,120,.45)">软件名称</div>
<div class="box" style="top:181px;height:44px;background:#e4f3ee"></div>
<svg class="w" style="left:15px;top:194px" width="18" height="19" viewBox="2 0 20 24"><path fill="#1aa37a" d="M6 18c0 .55.45 1 1 1h1v3.5c0 .83.67 1.5 1.5 1.5s1.5-.67 1.5-1.5V19h2v3.5c0 .83.67 1.5 1.5 1.5s1.5-.67 1.5-1.5V19h1c.55 0 1-.45 1-1V8H6v10zM3.5 8C2.67 8 2 8.67 2 9.5v7c0 .83.67 1.5 1.5 1.5S5 17.33 5 16.5v-7C5 8.67 4.33 8 3.5 8zm17 0c-.83 0-1.5.67-1.5 1.5v7c0 .83.67 1.5 1.5 1.5s1.5-.67 1.5-1.5v-7c0-.83-.67-1.5-1.5-1.5zm-4.97-5.84l1.3-1.3c.2-.2.2-.51 0-.71-.2-.2-.51-.2-.71 0l-1.48 1.48C13.85 1.230 12.95 1 12 1c-.96 0-1.860.23-2.66.63L7.850.15c-.2-.2-.51-.2-.71 0-.2.2-.2.51 0 .71l1.31 1.31C6.97 3.26 6 5.01 6 7h12c0-1.99-.97-3.75-2.47-4.84zM10 5H9V4h1v1zm5 0h-1V4h1v1z"/></svg>
<div class="ph" style="left:40.5px;top:194px;color:#3e9e84;font-size:15px">请输入软件名称~</div>

<div class="bar" style="top:240.3px;background:#f26422"></div>
<div class="sec" style="top:241.6px;color:#f3621c;text-shadow:0 1.5px 3px rgba(240,100,31,.45)">软件图标</div>
<div class="box" style="top:267.7px;height:44px;background:#fdeadc"></div>
<svg class="w" style="left:15px;top:282px" width="17" height="17" viewBox="0 0 17 17"><rect x="0.3" y="0.4" width="16" height="16.1" rx="1.5" fill="#f35e16"/><circle cx="5.1" cy="5.3" r="1.9" fill="#fde6d6"/><path d="M4.2 15.4L11.6 7.6Q12.6 6.6 13.6 7.6L15.2 9.6V15.4Z" fill="#fde6d6"/></svg>
<div class="ph" style="left:40.5px;top:281px;color:#e0804f;font-size:15px">请输入软件图标地址~</div>
<div class="w" style="left:263px;top:274px;width:90px;height:33px;background:#fd5b0f;border-radius:9px"></div>
<div class="ph" style="left:275px;top:280.5px;color:#fff;font-size:14.2px">上传图片</div>

<div class="bar" style="top:327.1px;background:#a25de9"></div>
<div class="sec" style="top:328.4px;color:#9850ec;text-shadow:0 1.5px 3px rgba(152,80,236,.45)">软件分类</div>
<div class="box" style="top:355px;height:43px;background:#f1e7fd"></div>
<svg class="w" style="left:20px;top:369px" width="17" height="17" viewBox="0 0 17 17" fill="#9d52ec"><rect x="0.3" y="0.3" width="7.1" height="7.4" rx="1.6"/><rect x="9.3" y="0.3" width="7.1" height="7.4" rx="1.6"/><rect x="0.3" y="9.4" width="7.1" height="7.3" rx="1.6"/><rect x="9.3" y="9.4" width="7.1" height="7.3" rx="1.6"/></svg>
<div class="ph" style="left:45px;top:369px;color:#a26fdf;font-size:15px">选择软件分类</div>

<div class="bar" style="top:414.4px;background:#ea5680"></div>
<div class="sec" style="top:415.7px;color:#ec517d;text-shadow:0 1.5px 3px rgba(236,81,125,.45)">软件简介</div>
<div class="box" style="top:442px;height:90px;background:#fde6ee"></div>
<div class="ph" style="left:11px;top:453px;color:#d46a8f;font-size:15px">请输入软件简介~</div>

<div class="bar" style="top:547.2px;background:#2f6de6"></div>
<div class="sec" style="top:548.5px;color:#2e6fee;text-shadow:0 1.5px 3px rgba(46,111,238,.45)">软件截图</div>
</div>

</div>
<div class="abs" style="left:618px;top:153px;width:1px;height:512px;background:#fdfdfd"></div>
<div id="vscroll" class="abs"></div><div id="vtrack" class="abs"></div>
<div id="hscroll" class="abs"></div>
<div id="hscroll2" class="abs"></div>
</body></html>
